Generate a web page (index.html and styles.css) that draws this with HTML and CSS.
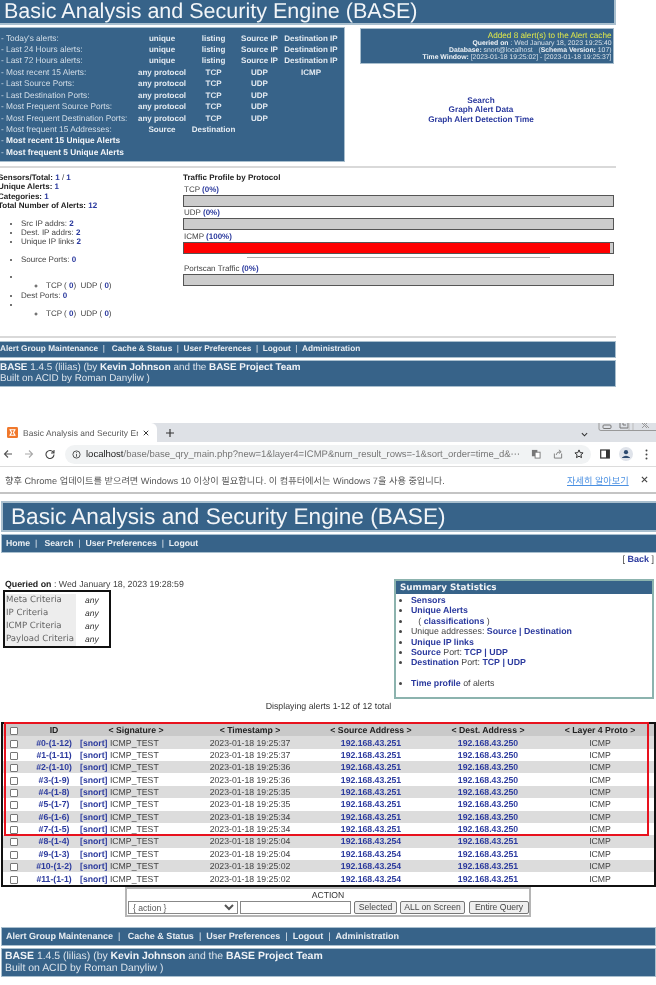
FILE: index.html
```html
<!DOCTYPE html>
<html lang="en">
<head>
<meta charset="utf-8">
<title>Basic Analysis and Security Engine (BASE)</title>
<link rel="stylesheet" href="styles.css">
</head>
<body>
<div class="sheet">
<section class="shot-top">
  <div class="title title-top">Basic Analysis and Security Engine (BASE)</div>
  <div class="top-panels">
    <div class="menu">
      <span class="lbl">- Today's alerts:</span><b>unique</b><b>listing</b><b>Source IP</b><b>Destination IP</b>
      <span class="lbl">- Last 24 Hours alerts:</span><b>unique</b><b>listing</b><b>Source IP</b><b>Destination IP</b>
      <span class="lbl">- Last 72 Hours alerts:</span><b>unique</b><b>listing</b><b>Source IP</b><b>Destination IP</b>
      <span class="lbl">- Most recent 15 Alerts:</span><b>any protocol</b><b>TCP</b><b>UDP</b><b>ICMP</b>
      <span class="lbl">- Last Source Ports:</span><b>any protocol</b><b>TCP</b><b>UDP</b><i></i>
      <span class="lbl">- Last Destination Ports:</span><b>any protocol</b><b>TCP</b><b>UDP</b><i></i>
      <span class="lbl">- Most Frequent Source Ports:</span><b>any protocol</b><b>TCP</b><b>UDP</b><i></i>
      <span class="lbl">- Most Frequent Destination Ports:</span><b>any protocol</b><b>TCP</b><b>UDP</b><i></i>
      <span class="lbl">- Most frequent 15 Addresses:</span><b>Source</b><b>Destination</b><i></i><i></i>
      <span class="lbl wide">- <strong>Most recent 15 Unique Alerts</strong></span>
      <span class="lbl wide">- <strong>Most frequent 5 Unique Alerts</strong></span>
    </div>
    <div class="side">
      <div class="cache">
        <div class="added">Added 8 alert(s) to the Alert cache</div>
        <div><b>Queried on</b> : Wed January 18, 2023 19:25:40</div>
        <div><b>Database:</b> snort@localhost &nbsp; (<b>Schema Version:</b> 107)</div>
        <div><b>Time Window:</b> [2023-01-18 19:25:02] - [2023-01-18 19:25:37]</div>
      </div>
      <div class="side-links">
        <a>Search</a>
        <a>Graph Alert Data</a>
        <a>Graph Alert Detection Time</a>
      </div>
    </div>
  </div>
  <hr class="rule rule-a">
  <div class="stats-row">
    <div class="stats">
      <div class="stat-lines">
        <div><b>Sensors/Total:</b> <a>1</a> / <a>1</a></div>
        <div><b>Unique Alerts:</b> <a>1</a></div>
        <div><b>Categories:</b> <a>1</a></div>
        <div><b>Total Number of Alerts:</b> <a>12</a></div>
      </div>
      <ul class="stat-list first">
        <li>Src IP addrs: <a>2</a></li>
        <li>Dest. IP addrs: <a>2</a></li>
        <li>Unique IP links <a>2</a></li>
      </ul>
      <ul class="stat-list second">
        <li>Source Ports: <a>0</a></li>
        <li class="empty spaced"></li>
      </ul>
      <ul class="stat-sub"><li>TCP ( <a>0</a>) &nbsp;UDP ( <a>0</a>)</li></ul>
      <ul class="stat-list">
        <li>Dest Ports: <a>0</a></li>
        <li class="empty"></li>
      </ul>
      <ul class="stat-sub"><li>TCP ( <a>0</a>) &nbsp;UDP ( <a>0</a>)</li></ul>
    </div>
    <div class="traffic">
      <div class="traffic-title">Traffic Profile by Protocol</div>
      <div class="proto">TCP <a>(0%)</a></div>
      <div class="bar"></div>
      <div class="proto">UDP <a>(0%)</a></div>
      <div class="bar"></div>
      <div class="proto">ICMP <a>(100%)</a></div>
      <div class="bar"><div class="fill" style="width:99.2%"></div></div>
      <hr class="mini-rule">
      <div class="proto scan">Portscan Traffic <a>(0%)</a></div>
      <div class="bar"></div>
    </div>
  </div>
  <hr class="rule rule-b">
  <div class="foot-nav foot-nav-top"><b>Alert Group Maintenance</b> &nbsp;|&nbsp; &nbsp;<b>Cache &amp; Status</b> &nbsp;|&nbsp; <b>User Preferences</b> &nbsp;|&nbsp; <b>Logout</b> &nbsp;|&nbsp; <b>Administration</b></div>
  <div class="foot-credit foot-credit-top"><div><b>BASE</b> 1.4.5 (lilias) (by <b>Kevin Johnson</b> and the <b>BASE Project Team</b></div><div>Built on ACID by Roman Danyliw )</div></div>
</section>

<section class="browser">
  <div class="tabs">
    <div class="tab">
      <svg class="favicon" viewBox="0 0 12 12"><rect width="12" height="12" rx="1.5" fill="#f0782c"/><path d="M3 2.5 5 6 3 9.5M9 2.5 7 6 9 9.5M3.5 3h5M3.5 9h5" fill="none" stroke="#fff" stroke-width="1.3"/></svg>
      <span class="tab-title">Basic Analysis and Security En</span>
      <svg class="ico-s" viewBox="0 0 8 8"><path d="M1 1l6 6M7 1L1 7" stroke="#333" stroke-width="1.3"/></svg>
    </div>
    <svg class="plus" viewBox="0 0 9 9"><path d="M4.5 0v9M0 4.5h9" stroke="#333" stroke-width="1.3"/></svg>
    <svg class="chev" viewBox="0 0 8 5"><path d="M1 1l3 3 3-3" fill="none" stroke="#333" stroke-width="1.2"/></svg>
    <div class="winctl">
      <svg viewBox="0 0 58 8" width="58" height="8"><path d="M1 0v6q0 1.500 2 1.500H58" fill="none" stroke="#999"/><rect x="5" y="2" width="8" height="3.500" rx="1" fill="none" stroke="#777"/><path d="M22 0v5h8V0M25 0v2h3" fill="none" stroke="#777"/><path d="M31 0v7M35 0v7" stroke="#bbb"/><path d="M44 0l5 5M49 0l-5 5M46 0l5 5" stroke="#999"/></svg>
    </div>
  </div>
  <div class="addr-row">
    <svg class="nav-ico" viewBox="0 0 10 10"><path d="M9 5H1.500M5 1.500 1.500 5 5 8.500" fill="none" stroke="#555" stroke-width="1.100"/></svg>
    <svg class="nav-ico" viewBox="0 0 10 10"><path d="M1 5h7.500M5 1.500 8.500 5 5 8.500" fill="none" stroke="#aaa" stroke-width="1.100"/></svg>
    <svg class="nav-ico last" viewBox="0 0 10 10"><path d="M8.500 3.500A4 4 0 1 0 9 5.500M9 1v3H6" fill="none" stroke="#444" stroke-width="1.100"/></svg>
    <div class="pill">
      <svg class="info" viewBox="0 0 10 10"><circle cx="5" cy="5" r="4" fill="none" stroke="#444"/><path d="M5 4.500v3M5 2.500v1" stroke="#444"/></svg>
      <span class="url"><span class="host">localhost</span>/base/base_qry_main.php?new=1&amp;layer4=ICMP&amp;num_result_rows=-1&amp;sort_order=time_d&amp;⋯</span>
      <svg class="pill-ico ico-tr" viewBox="0 0 11 11"><rect x="1" y="1" width="6" height="7" fill="#777"/><rect x="4.500" y="3.500" width="5.500" height="6.500" fill="#fff" stroke="#777"/></svg>
      <svg class="pill-ico ico-sh" viewBox="0 0 11 11"><path d="M1.500 5v5h8V5M3.500 6.500Q4 3 8 3M6.500 1 9 3 6.500 5" fill="none" stroke="#777"/></svg>
      <svg class="pill-ico ico-st" viewBox="0 0 11 11"><path d="M5.500 1l1.300 3 3.200.300-2.400 2.100.700 3.100-2.800-1.600-2.800 1.600.700-3.100L1 4.300l3.200-.300z" fill="none" stroke="#333" stroke-width="1.100"/></svg>
    </div>
    <svg class="tool-ico" viewBox="0 0 10 10"><rect x=".7" y="1" width="8.600" height="8" fill="none" stroke="#333" stroke-width="1.200"/><rect x="6" y="1" width="3.300" height="8" fill="#333"/></svg>
    <svg class="avatar" viewBox="0 0 14 14"><circle cx="7" cy="7" r="7" fill="#dfe3ea"/><circle cx="7" cy="5.200" r="2.100" fill="#2c4a70"/><path d="M3 10.500q4-3.500 8 0v.500H3z" fill="#2c4a70"/></svg>
    <svg class="dots" viewBox="0 0 3 11"><circle cx="1.500" cy="1.500" r="1" fill="#444"/><circle cx="1.500" cy="5.500" r="1" fill="#444"/><circle cx="1.500" cy="9.500" r="1" fill="#444"/></svg>
  </div>
  <div class="infobar">
    <span class="info-msg">향후 Chrome 업데이트를 받으려면 Windows 10 이상이 필요합니다. 이 컴퓨터에서는 Windows 7을 사용 중입니다.</span>
    <a class="info-link">자세히 알아보기</a>
    <svg class="info-x" viewBox="0 0 8 8"><path d="M1 1l6 6M7 1L1 7" stroke="#444" stroke-width="1.300"/></svg>
  </div>
</section>

<section class="shot-bottom">
  <div class="title title-main">Basic Analysis and Security Engine (BASE)</div>
  <div class="main-nav"><b>Home</b> &nbsp;|&nbsp; &nbsp;<b>Search</b> &nbsp;|&nbsp; <b>User Preferences</b> &nbsp;|&nbsp; <b>Logout</b></div>
  <div class="back">[ <a>Back</a> ]</div>
  <div class="query-row">
    <div class="query-left">
      <div class="queried"><b>Queried on</b> : Wed January 18, 2023 19:28:59</div>
      <table class="criteria">
        <tr><th>Meta Criteria</th><td>any</td></tr>
        <tr><th>IP Criteria</th><td>any</td></tr>
        <tr><th>ICMP Criteria</th><td>any</td></tr>
        <tr><th>Payload Criteria</th><td>any</td></tr>
      </table>
    </div>
    <div class="summary">
      <div class="summary-head">Summary Statistics</div>
      <ul>
        <li><a>Sensors</a></li>
        <li><a>Unique Alerts</a></li>
        <li>&nbsp; &nbsp;( <a>classifications</a> )</li>
        <li>Unique addresses: <a>Source</a> <a>|</a> <a>Destination</a></li>
        <li><a>Unique IP links</a></li>
        <li><a>Source</a> Port: <a>TCP</a> <a>|</a> <a>UDP</a></li>
        <li><a>Destination</a> Port: <a>TCP</a> <a>|</a> <a>UDP</a></li>
        <li class="gap"><a>Time profile</a> of alerts</li>
      </ul>
    </div>
  </div>
  <div class="displaying">Displaying alerts 1-12 of 12 total</div>
  <div class="results">
    <table class="alerts">
      <colgroup><col class="c0"><col class="c1"><col class="c2"><col class="c3"><col class="c4"><col class="c5"><col class="c6"></colgroup>
      <thead><tr><th><span class="cb"></span></th><th>ID</th><th>&lt; Signature &gt;</th><th>&lt; Timestamp &gt;</th><th>&lt; Source Address &gt;</th><th>&lt; Dest. Address &gt;</th><th>&lt; Layer 4 Proto &gt;</th></tr></thead>
      <tbody>
        <tr><td><span class="cb"></span></td><td><a>#0-(1-12)</a></td><td class="sig"><a>[snort]</a> ICMP_TEST</td><td>2023-01-18 19:25:37</td><td><a>192.168.43.251</a></td><td><a>192.168.43.250</a></td><td>ICMP</td></tr>
        <tr><td><span class="cb"></span></td><td><a>#1-(1-11)</a></td><td class="sig"><a>[snort]</a> ICMP_TEST</td><td>2023-01-18 19:25:37</td><td><a>192.168.43.251</a></td><td><a>192.168.43.250</a></td><td>ICMP</td></tr>
        <tr><td><span class="cb"></span></td><td><a>#2-(1-10)</a></td><td class="sig"><a>[snort]</a> ICMP_TEST</td><td>2023-01-18 19:25:36</td><td><a>192.168.43.251</a></td><td><a>192.168.43.250</a></td><td>ICMP</td></tr>
        <tr><td><span class="cb"></span></td><td><a>#3-(1-9)</a></td><td class="sig"><a>[snort]</a> ICMP_TEST</td><td>2023-01-18 19:25:36</td><td><a>192.168.43.251</a></td><td><a>192.168.43.250</a></td><td>ICMP</td></tr>
        <tr><td><span class="cb"></span></td><td><a>#4-(1-8)</a></td><td class="sig"><a>[snort]</a> ICMP_TEST</td><td>2023-01-18 19:25:35</td><td><a>192.168.43.251</a></td><td><a>192.168.43.250</a></td><td>ICMP</td></tr>
        <tr><td><span class="cb"></span></td><td><a>#5-(1-7)</a></td><td class="sig"><a>[snort]</a> ICMP_TEST</td><td>2023-01-18 19:25:35</td><td><a>192.168.43.251</a></td><td><a>192.168.43.250</a></td><td>ICMP</td></tr>
        <tr><td><span class="cb"></span></td><td><a>#6-(1-6)</a></td><td class="sig"><a>[snort]</a> ICMP_TEST</td><td>2023-01-18 19:25:34</td><td><a>192.168.43.251</a></td><td><a>192.168.43.250</a></td><td>ICMP</td></tr>
        <tr><td><span class="cb"></span></td><td><a>#7-(1-5)</a></td><td class="sig"><a>[snort]</a> ICMP_TEST</td><td>2023-01-18 19:25:34</td><td><a>192.168.43.251</a></td><td><a>192.168.43.250</a></td><td>ICMP</td></tr>
        <tr><td><span class="cb"></span></td><td><a>#8-(1-4)</a></td><td class="sig"><a>[snort]</a> ICMP_TEST</td><td>2023-01-18 19:25:04</td><td><a>192.168.43.254</a></td><td><a>192.168.43.251</a></td><td>ICMP</td></tr>
        <tr><td><span class="cb"></span></td><td><a>#9-(1-3)</a></td><td class="sig"><a>[snort]</a> ICMP_TEST</td><td>2023-01-18 19:25:04</td><td><a>192.168.43.254</a></td><td><a>192.168.43.251</a></td><td>ICMP</td></tr>
        <tr><td><span class="cb"></span></td><td><a>#10-(1-2)</a></td><td class="sig"><a>[snort]</a> ICMP_TEST</td><td>2023-01-18 19:25:02</td><td><a>192.168.43.254</a></td><td><a>192.168.43.251</a></td><td>ICMP</td></tr>
        <tr><td><span class="cb"></span></td><td><a>#11-(1-1)</a></td><td class="sig"><a>[snort]</a> ICMP_TEST</td><td>2023-01-18 19:25:02</td><td><a>192.168.43.254</a></td><td><a>192.168.43.251</a></td><td>ICMP</td></tr>
      </tbody>
    </table>
    <div class="redbox"></div>
  </div>
  <div class="action">
    <div class="action-title">ACTION</div>
    <div class="action-controls">
      <select class="act-select"><option>{ action }</option></select>
      <input class="act-input" type="text">
      <button class="act-btn btn-a">Selected</button>
      <button class="act-btn btn-b">ALL on Screen</button>
      <button class="act-btn btn-c">Entire Query</button>
    </div>
  </div>
  <div class="foot-nav foot-nav-main"><b>Alert Group Maintenance</b> &nbsp;|&nbsp; &nbsp;<b>Cache &amp; Status</b> &nbsp;|&nbsp; <b>User Preferences</b> &nbsp;|&nbsp; <b>Logout</b> &nbsp;|&nbsp; <b>Administration</b></div>
  <div class="foot-credit foot-credit-main"><div><b>BASE</b> 1.4.5 (lilias) (by <b>Kevin Johnson</b> and the <b>BASE Project Team</b></div><div>Built on ACID by Roman Danyliw )</div></div>
</section>
</div>
</body>
</html>
```
FILE: styles.css
```css
* { box-sizing: border-box; }
html, body { margin: 0; padding: 0; background: #fff; }
body { font-family: "Liberation Sans", Arial, sans-serif; color: #444; overflow: hidden; text-rendering: geometricPrecision; }
.sheet { width: 656px; height: 985px; overflow: hidden; filter: blur(0.35px); }
a { color: #2b3a9e; font-weight: bold; }
ul { margin: 0; padding: 0; }

.title { background: #376389; color: #f2f5f8; white-space: nowrap; border: 2px solid #a9bfce; }

/* top capture */
.shot-top { height: 388px; }
.title-top { width: 616px; height: 25px; border-top: 0; border-left: 0; font-size: 21.5px; line-height: 23px; padding-left: 4px; }
.top-panels { display: flex; margin-top: 2px; height: 135px; }
.menu { width: 345px; height: 135px; background: #376389; border: 1.5px solid #a9bfce; border-left: 0; padding-top: 4.5px; display: grid; grid-template-columns: 137px 50px 53px 39px 64px; grid-auto-rows: 11.45px; font-size: 8px; line-height: 11.45px; color: #d3dee8; white-space: nowrap; }
.menu b { color: #e4ebf2; text-align: center; }
.menu .lbl { padding-left: 1px; font-size: 8.3px; }
.menu .wide { grid-column: 1 / -1; }
.menu strong { color: #f4f6f9; }
.side { margin-left: 15px; width: 254px; }
.cache { margin-top: 1px; height: 36px; background: #376389; border: 1.5px solid #a9bfce; padding: 2px 1.5px 0 0; text-align: right; font-size: 6.85px; line-height: 7.1px; color: #d6e0e9; white-space: nowrap; }
.cache b { color: #eef2f6; }
.added { color: #dfe84a; font-size: 8.2px; line-height: 9px; }
.side-links { margin-top: 31.5px; padding-right: 12px; display: flex; flex-direction: column; align-items: center; font-size: 8.2px; line-height: 9.5px; }
.rule { border: 0; margin: 0; background: #d9d9d9; height: 2px; }
.rule-a { margin-top: 4px; width: 616px; }
.stats-row { display: flex; height: 168px; font-size: 8px; }
.stats { width: 183px; padding-top: 5px; white-space: nowrap; }
.stat-lines { margin-left: -2px; line-height: 9.4px; }
.stat-lines b { color: #222; }
.stat-list { list-style: disc; padding-left: 21px; line-height: 9.4px; }
.stat-list.first { margin-top: 8px; }
.stat-list.second { margin-top: 8px; }
.stat-list .empty { height: 9.4px; }
.stat-list .spaced { margin-top: 7.6px; }
.stat-sub { list-style: circle; padding-left: 46px; line-height: 9.4px; }
.traffic { width: 431px; padding-top: 5px; }
.traffic-title { font-weight: bold; color: #222; line-height: 10px; }
.proto { line-height: 10px; margin-top: 1.5px; padding-left: 1px; }
.proto.scan { margin-top: 6px; }
.bar { height: 12px; background: #ccc; border: 1px solid #555; border-top-width: 1.5px; }
.fill { height: 100%; background: #f00; }
.mini-rule { border: 0; height: 1.5px; background: #aaa; width: 303px; margin: 3px 0 0 64px; }
.rule-b { margin-top: 0; width: 616px; }
.foot-nav { background: #376389; border: 1.5px solid #a9bfce; color: #e8edf2; white-space: nowrap; }
.foot-nav-top { width: 616px; height: 17px; margin-top: 3px; font-size: 8.25px; line-height: 14px; border-left: 0; }
.foot-credit { background: #376389; border: 1.5px solid #a9bfce; color: #dce4ec; white-space: nowrap; }
.foot-credit b { color: #f0f3f7; }
.foot-credit-top { width: 616px; height: 27px; margin-top: 2px; font-size: 9.9px; line-height: 10.5px; border-left: 0; padding-top: 2px; }

/* browser */
.browser { padding-top: 35px; }
.tabs { position: relative; height: 19px; background: #dee1e6; display: flex; align-items: center; }
.tab { width: 157px; height: 19px; background: #fff; border-radius: 0 6px 0 0; display: flex; align-items: center; padding-left: 7px; }
.favicon { width: 11px; height: 11px; flex: none; }
.tab-title { width: 115px; margin-left: 5px; font-size: 8.4px; color: #555; white-space: nowrap; overflow: hidden; letter-spacing: .1px; }
.ico-s { width: 6px; height: 6px; margin-left: 5px; flex: none; }
.plus { width: 8px; height: 8px; margin-left: 9px; }
.chev { width: 7px; height: 5px; margin-left: 407px; margin-top: 3px; }
.winctl { position: absolute; right: 0; top: 0; height: 8px; }
.winctl svg { display: block; }
.addr-row { height: 25px; display: flex; align-items: center; border-bottom: 1px solid #dcdcdc; padding-left: 3px; }
.nav-ico { width: 10px; height: 10px; flex: none; margin-right: 11px; }
.nav-ico.last { margin-right: 10px; }
.pill { width: 526px; height: 19px; background: #f1f3f4; border-radius: 10px; display: flex; align-items: center; padding-left: 7px; flex: none; }
.info { width: 9px; height: 9px; flex: none; }
.url { width: 438px; margin-left: 5px; font-size: 9.5px; color: #777; white-space: nowrap; overflow: hidden; }
.host { color: #222; }
.pill-ico { width: 10px; height: 10px; flex: none; }
.ico-tr { margin-left: 7px; }
.ico-sh { margin-left: 12px; }
.ico-st { margin-left: 11px; }
.tool-ico { width: 10px; height: 10px; margin-left: 9px; flex: none; }
.avatar { width: 14px; height: 14px; margin-left: 9px; flex: none; }
.dots { width: 3px; height: 11px; margin-left: 12px; flex: none; }
.infobar { height: 27px; border-bottom: 2px solid #c4c4c4; display: flex; align-items: center; padding-left: 5px; font-family: "Liberation Sans", "Noto Sans CJK KR", sans-serif; font-size: 9.2px; color: #555; white-space: nowrap; }
.info-msg { width: 562px; }
.info-link { color: #4a90e2; font-weight: normal; text-decoration: underline; width: 74px; }
.info-x { width: 7px; height: 7px; }

/* main capture */
.shot-bottom { padding-top: 7px; }
.title-main { margin-left: 1px; width: 656px; height: 31px; font-size: 22.6px; line-height: 27px; padding-left: 8px; border-right: 0; }
.main-nav { margin-left: 1px; margin-top: 2px; width: 656px; height: 19px; background: #376389; border: 1.5px solid #a9bfce; border-right: 0; color: #e8edf2; font-size: 8.7px; line-height: 16px; padding-left: 4px; white-space: nowrap; }
.back { text-align: right; font-size: 9px; line-height: 11px; margin-top: 1px; padding-right: 2px; }
.query-row { display: flex; justify-content: space-between; height: 132px; margin-top: 5px; }
.query-left { padding-top: 9px; }
.queried { padding-left: 5px; font-size: 8.8px; line-height: 11px; }
.queried b { color: #222; }
.criteria { margin: 0 0 0 3px; border: 2px solid #111; border-collapse: separate; border-spacing: 0; width: 108px; padding-top: 1.5px; }
.criteria th { background: #ededed; font: 8.6px/13.1px "DejaVu Sans", sans-serif; color: #666; text-align: left; padding: 0 0 0 1px; width: 71px; }
.criteria td { font-size: 8.5px; font-style: italic; color: #333; line-height: 13.1px; padding: 0 0 0 9px; }
.summary { margin-right: 2px; margin-top: 9px; width: 260px; height: 120px; border: 2px solid #8cb3ae; font-size: 8.8px; flex: none; }
.summary-head { background: #376389; color: #f0f3f7; font: bold 8.8px/14px "DejaVu Sans", sans-serif; height: 13px; padding-left: 4px; }
.summary ul { list-style: disc; padding: 1px 0 0 15px; line-height: 10.4px; }
.summary .gap { margin-top: 10.5px; }
.displaying { text-align: center; font-size: 8.8px; line-height: 11px; color: #333; margin-top: -1px; margin-left: 1px; }
.results { position: relative; margin: 10px 0 0 1px; width: 655px; }
.alerts { width: 655px; table-layout: fixed; border-collapse: separate; border-spacing: 0; border: 2px solid #111; font-size: 8.7px; color: #444; white-space: nowrap; }
.c0 { width: 25px; } .c1 { width: 52px; } .c2 { width: 112px; } .c3 { width: 116px; } .c4 { width: 126px; } .c5 { width: 108px; }
.alerts th { height: 12.4px; padding: 0; background: #c9c9c9; color: #222; font-weight: bold; line-height: 12px; text-align: center; overflow: hidden; }
.alerts td { height: 12.37px; padding: 0; line-height: 12px; text-align: center; overflow: hidden; }
.alerts th:last-child, .alerts td:last-child { padding-left: 4px; }
.alerts tbody tr:nth-child(odd) td { background: #dcdcdc; }
.alerts .sig { text-align: left; }
.cb { display: block; width: 8px; height: 8px; margin: 2px 0 0 7px; border: 1px solid #777; background: #fff; border-radius: 1px; }
.redbox { position: absolute; left: 3px; top: 0; width: 645px; height: 114px; border: 2px solid #e8121e; pointer-events: none; }
.action { margin: 0 0 0 125px; width: 406px; height: 30px; border: 2px solid #b5b5b5; font-size: 8.6px; color: #333; }
.action-title { text-align: center; line-height: 11px; margin-top: 1px; }
.action-controls { display: flex; align-items: stretch; height: 13.5px; padding-left: 1px; }
.act-select { width: 110px; height: 13.5px; padding: 0; font: 8.6px "Liberation Sans", sans-serif; color: #555; background: #fff; border: 1px solid #888; }
.act-input { width: 111px; height: 13.5px; margin-left: 2px; padding: 0; border: 1px solid #888; background: #fff; }
.act-btn { height: 13.5px; padding: 0; font: 8.6px "Liberation Sans", sans-serif; color: #444; background: #efefef; border: 1px solid #777; border-radius: 2px; }
.btn-a { width: 43px; margin-left: 3px; }
.btn-b { width: 65px; margin-left: 3px; }
.btn-c { width: 60px; margin-left: 4px; }
.foot-nav-main { margin: 10px 0 0 1px; width: 655px; height: 19px; font-size: 9px; line-height: 16px; padding-left: 4px; }
.foot-credit-main { margin: 2px 0 0 1px; width: 655px; height: 29px; font-size: 10.45px; line-height: 12.5px; padding: 2px 0 0 3px; }
```
